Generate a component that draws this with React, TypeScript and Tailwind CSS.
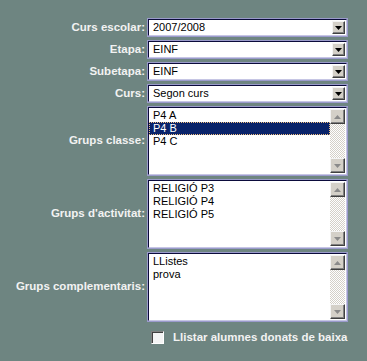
import React from "react";

const Tri = ({ up = false, color = "#000" }: { up?: boolean; color?: string }) => (
  <svg width="7" height="4" viewBox="0 0 7 4">
    <path d={up ? "M3.5 0 L7 4 L0 4 Z" : "M0 0 L7 0 L3.5 4 Z"} fill={color} />
  </svg>
);

const Label = ({ children }: { children: React.ReactNode }) => (
  <div className="text-right text-[11.5px] font-bold text-[#f2f2f2] leading-none whitespace-nowrap">{children}</div>
);

const Frame = ({ className, children }: { className: string; children: React.ReactNode }) => (
  <div className={`border border-[#9a9acb] ${className}`}>
    <div className="flex h-full border-t border-l border-t-[#0b0b3b] border-l-[#0b0b3b] border-r border-b border-r-[#c6c6e4] border-b-[#c6c6e4] bg-white">
      {children}
    </div>
  </div>
);

const Btn = ({ className, children }: { className: string; children: React.ReactNode }) => (
  <div
    className={`flex items-center justify-center bg-[#d4d0c8] border border-t-[#f4f4f4] border-l-[#f4f4f4] border-r-[#404040] border-b-[#404040] shadow-[inset_-1px_-1px_0_#808080] ${className}`}
  >
    {children}
  </div>
);

const Select = ({ value }: { value: string }) => (
  <Frame className="h-[19px]">
    <div className="flex-1 pl-[4px] text-[11px] leading-[15px] text-black">{value}</div>
    <div className="flex items-center pr-[1px]">
      <Btn className="w-[13px] h-[13px]">
        <Tri />
      </Btn>
    </div>
  </Frame>
);

const ListBox = ({ items, selected }: { items: string[]; selected?: number }) => (
  <Frame className="h-[70px]">
    <div className="flex-1 pt-[1px] text-[11px] leading-[13px] text-black">
      {items.map((it, i) => (
        <div
          key={it}
          className={
            i === selected
              ? "pl-[4px] bg-[#0a246a] text-white outline outline-1 outline-dotted outline-offset-[-1px] outline-[#f0c080]"
              : "pl-[4px]"
          }
        >
          {it}
        </div>
      ))}
    </div>
    <div className="flex flex-col w-[15px] my-[1px] mr-[1px] bg-[repeating-conic-gradient(#d4d0c8_0_25%,#ffffff_0_50%)] bg-[length:2px_2px]">
      <Btn className="h-[15px] w-[15px]">
        <Tri up color="#8a8a8a" />
      </Btn>
      <div className="flex-1" />
      <Btn className="h-[15px] w-[15px]">
        <Tri color="#8a8a8a" />
      </Btn>
    </div>
  </Frame>
);

export default function App() {
  return (
    <div className="min-h-[361px] w-full bg-[#6e8581] font-['Liberation_Sans',Arial,sans-serif]">
      <div className="grid grid-cols-[145px_201px] gap-x-[2px] gap-y-[3px] pt-[18px] items-center">
        <Label>Curs escolar:</Label>
        <Select value="2007/2008" />
        <Label>Etapa:</Label>
        <Select value="EINF" />
        <Label>Subetapa:</Label>
        <Select value="EINF" />
        <Label>Curs:</Label>
        <Select value="Segon curs" />
        <Label>Grups classe:</Label>
        <ListBox items={["P4 A", "P4 B", "P4 C"]} selected={1} />
        <Label>Grups d'activitat:</Label>
        <ListBox items={["RELIGIÓ P3", "RELIGIÓ P4", "RELIGIÓ P5"]} />
        <Label>Grups complementaris:</Label>
        <ListBox items={["LListes", "prova"]} />
        <div />
        <div className="flex items-center mt-[6px] pl-[4px] gap-[9px]">
          <div className="w-[13px] h-[13px] bg-[#f4f4f4] border border-t-[#808080] border-l-[#808080] border-r-[#ffffff] border-b-[#ffffff] shadow-[inset_1px_1px_0_#404040]" />
          <span className="text-[11.5px] font-bold text-[#f2f2f2] leading-none whitespace-nowrap">
            Llistar alumnes donats de baixa
          </span>
        </div>
      </div>
    </div>
  );
}
